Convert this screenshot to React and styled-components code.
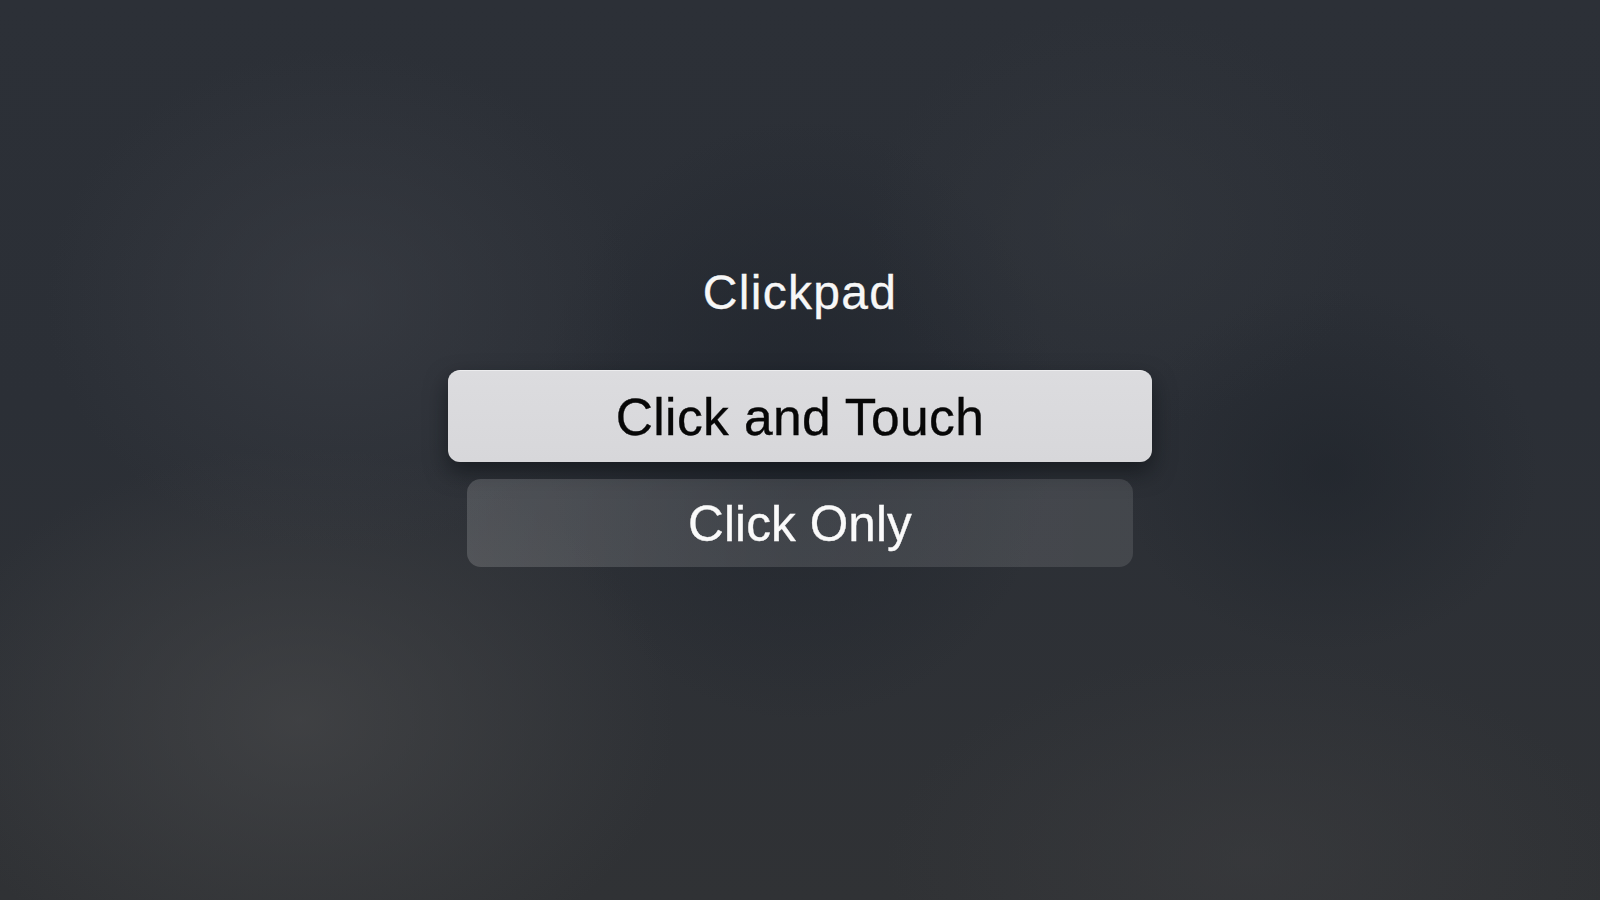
import React, { useState } from 'react';
import styled, { createGlobalStyle } from 'styled-components';

const GlobalStyle = createGlobalStyle`
  html, body {
    margin: 0;
    padding: 0;
    background: #2b2f35;
  }
  body {
    font-family: "Liberation Sans", Arial, sans-serif;
    -webkit-font-smoothing: antialiased;
  }
`;

const options = ["Click and Touch", "Click Only"];

const App = () => {
  const [selected, setSelected] = useState(0);

  return (
    <>
      <GlobalStyle />
      <Screen>
        <Menu>
          <Title>Clickpad</Title>
          <OptionList>
            {options.map((label, index) => (
              <Option
                key={label}
                $focused={index === selected}
                onClick={() => setSelected(index)}
              >
                {label}
              </Option>
            ))}
          </OptionList>
        </Menu>
      </Screen>
    </>
  );
};

export default App;

// -------------------- CSS -------------------- //

const Screen = styled.div`
  width: 1600px;
  height: 900px;
  overflow: hidden;
  display: flex;
  justify-content: center;
  align-items: flex-start;
  background:
    radial-gradient(ellipse 420px 360px at 340px 300px, rgba(62, 65, 72, 0.55), transparent 70%),
    radial-gradient(ellipse 520px 380px at 300px 720px, rgba(70, 71, 73, 0.7), transparent 72%),
    radial-gradient(ellipse 520px 300px at 1250px 860px, rgba(60, 61, 64, 0.55), transparent 70%),
    radial-gradient(ellipse 360px 300px at 1120px 220px, rgba(54, 58, 64, 0.45), transparent 70%),
    radial-gradient(ellipse 300px 260px at 1330px 470px, rgba(30, 35, 42, 0.6), transparent 70%),
    radial-gradient(ellipse 360px 420px at 800px 420px, rgba(30, 35, 43, 0.7), transparent 72%),
    linear-gradient(180deg, #2c3037 0%, #2b2f36 45%, #303235 100%);
`;

const Menu = styled.div`
  display: flex;
  flex-direction: column;
  align-items: center;
  padding-top: 265px;
`;

const Title = styled.h1`
  margin: 0;
  font-size: 48px;
  font-weight: 400;
  line-height: 56px;
  color: #f7f7f7;
  letter-spacing: 1.3px;
  -webkit-text-stroke: 0.3px #f7f7f7;
`;

const OptionList = styled.div`
  display: flex;
  flex-direction: column;
  align-items: center;
  gap: 17px;
  margin-top: 49px;
`;

const Option = styled.div`
  display: flex;
  align-items: center;
  justify-content: center;
  box-sizing: border-box;
  width: ${({ $focused }) => ($focused ? "704px" : "666px")};
  height: ${({ $focused }) => ($focused ? "92px" : "88px")};
  border-radius: ${({ $focused }) => ($focused ? "12px" : "14px")};
  font-size: ${({ $focused }) => ($focused ? "51.5px" : "49.5px")};
  letter-spacing: ${({ $focused }) => ($focused ? "0.4px" : "0.1px")};
  color: ${({ $focused }) => ($focused ? "#070707" : "#fafafa")};
  -webkit-text-stroke: 0.35px currentColor;
  background: ${({ $focused }) =>
    $focused
      ? "linear-gradient(180deg, #dcdcdf 0%, #d7d7da 100%)"
      : "linear-gradient(90deg, rgba(255,255,255,0.16) 0%, rgba(255,255,255,0.12) 50%, rgba(255,255,255,0.11) 100%)"};
  border-top: ${({ $focused }) => ($focused ? "1px solid #ececee" : "none")};
  box-shadow: ${({ $focused }) =>
    $focused ? "0 10px 22px rgba(10, 12, 16, 0.55)" : "none"};
  cursor: pointer;
  user-select: none;
`;
